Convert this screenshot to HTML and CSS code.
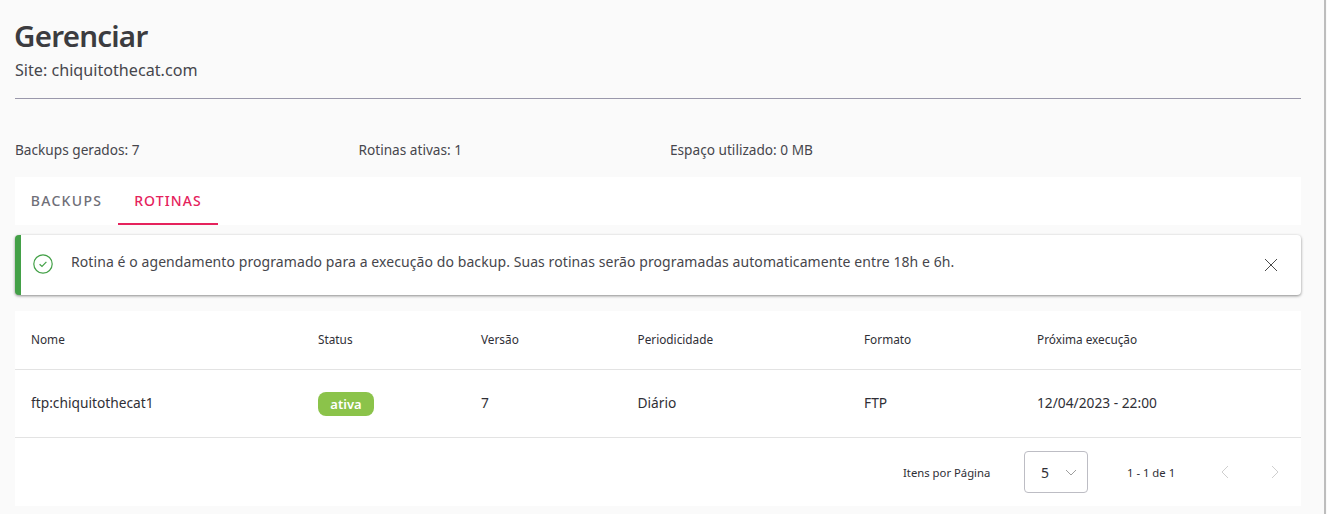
FILE: index.html
```html
<!DOCTYPE html>
<html lang="pt">
<head>
<meta charset="utf-8">
<title>Gerenciar</title>
<link rel="stylesheet" href="styles.css">
</head>
<body>
<main class="page">
  <header class="head">
    <h1 class="title">Gerenciar</h1>
    <p class="site">Site: chiquitothecat.com</p>
  </header>
  <section class="stats">
    <span class="stat s1">Backups gerados: 7</span>
    <span class="stat s2">Rotinas ativas: 1</span>
    <span class="stat">Espaço utilizado: 0 MB</span>
  </section>
  <nav class="tabs">
    <a class="tab">BACKUPS</a>
    <a class="tab active">ROTINAS</a>
  </nav>
  <div class="alert">
    <svg class="check" width="20" height="20" viewBox="0 0 20 20" fill="none"><circle cx="10" cy="10" r="9.2" stroke="#43a047" stroke-width="1.2"/><path d="M6.6 10.2l2.4 2.3 4.4-4.6" stroke="#43a047" stroke-width="1.2"/></svg>
    <span class="alert-text">Rotina é o agendamento programado para a execução do backup. Suas rotinas serão programadas automaticamente entre 18h e 6h.</span>
    <svg class="close" width="14" height="14" viewBox="0 0 14 14" fill="none"><path d="M1 1l12 12M13 1L1 13" stroke="#4a4a4a" stroke-width="1"/></svg>
  </div>
  <section class="card">
    <div class="row header">
      <span class="c1">Nome</span><span class="c2">Status</span><span class="c3">Versão</span><span class="c4">Periodicidade</span><span class="c5">Formato</span><span class="c6">Próxima execução</span>
    </div>
    <div class="row body-row">
      <span class="c1">ftp:chiquitothecat1</span><span class="c2 badge-cell"><b class="badge">ativa</b></span><span class="c3">7</span><span class="c4">Diário</span><span class="c5">FTP</span><span class="c6">12/04/2023 - 22:00</span>
    </div>
    <div class="pager">
      <span class="per">Itens por Página</span>
      <div class="select"><span>5</span><svg width="12" height="7" viewBox="0 0 12 7" fill="none"><path d="M1 1l5 5 5-5" stroke="#9e9e9e" stroke-width="1"/></svg></div>
      <span class="range">1 - 1 de 1</span>
      <svg class="arrow a1" width="9" height="14" viewBox="0 0 9 14" fill="none"><path d="M8 1L2 7l6 6" stroke="#cfcfcf" stroke-width="1"/></svg>
      <svg class="arrow" width="9" height="14" viewBox="0 0 9 14" fill="none"><path d="M1 1l6 6-6 6" stroke="#cfcfcf" stroke-width="1"/></svg>
    </div>
  </section>
</main>
<div class="scroll"></div>
</body>
</html>
```
FILE: styles.css
```css
* { box-sizing: border-box; }
html, body { margin: 0; height: 100%; overflow: hidden; }
body { background: #fafafa; font-family: "Noto Sans", "Open Sans", sans-serif; color: #3f3f46; display: flex; }
.page { width: 1286px; margin-left: 15px; flex: none; }
.scroll { width: 2px; height: 514px; margin-left: 23px; background: #bdbdbd; flex: none; }
.head { height: 99px; border-bottom: 1px solid #9a98ab; padding-top: 16px; }
.title { margin: 0 0 0 -1px; font-size: 29.5px; line-height: 40px; font-weight: 600; color: #3c3c40; letter-spacing: -0.75px; }
.site { margin: 4px 0 0; font-size: 16.15px; line-height: 20px; color: #46464c; }
.stats { display: flex; height: 78px; padding-top: 41px; font-size: 13.65px; line-height: 20px; color: #46464c; }
.s1 { width: 343.5px; }
.s2 { width: 311.5px; }
.tabs { display: flex; height: 48px; background: #fff; }
.tab { width: 103px; text-align: center; font-size: 14px; line-height: 48px; letter-spacing: 1.3px; color: #6f6f78; font-weight: 500; }
.tab.active { width: 100px; color: #e5225c; border-bottom: 2px solid #e5225c; height: 48px; letter-spacing: 1.1px; }
.alert { display: flex; align-items: center; height: 60px; margin-top: 10px; background: #fff; border-left: 6px solid #43a047; border-radius: 4px; box-shadow: 0 1px 3px rgba(0,0,0,.45); padding: 0 23px 0 12px; font-size: 14px; color: #46464c; }
.check { flex: none; margin: 0 18px 2px 0; }
.alert-text { flex: 1; padding-bottom: 8px; letter-spacing: .08px; }
.close { flex: none; }
.card { margin-top: 16px; background: #fff; height: 195px; }
.row { display: flex; align-items: center; border-bottom: 1px solid #e3e3e3; padding-left: 16px; padding-bottom: 2px; }
.header { height: 59px; font-size: 11.8px; color: #2f2f36; }
.body-row { height: 68px; font-size: 13.75px; color: #2f2f36; }
.c1 { width: 287px; }
.c2 { width: 163px; }
.c3 { width: 156.5px; }
.c4 { width: 226.5px; }
.c5 { width: 173px; }
.badge-cell { display: flex; padding-top: 2px; }
.badge { display: block; width: 56px; height: 24px; line-height: 24px; background: #8bc34a; color: #fff; border-radius: 8px; text-align: center; font-size: 13px; font-weight: 600; }
.pager { display: flex; align-items: center; height: 68px; padding-left: 888px; font-size: 11.3px; color: #2f2f36; }
.per { width: 121px; }
.select { width: 64px; height: 42px; border: 1px solid #bdbdc4; border-radius: 4px; display: flex; align-items: center; padding-left: 16px; font-size: 14px; gap: 16px; }
.range { margin-left: 39px; width: 93px; }
.arrow.a1 { margin-right: 42px; }
```
